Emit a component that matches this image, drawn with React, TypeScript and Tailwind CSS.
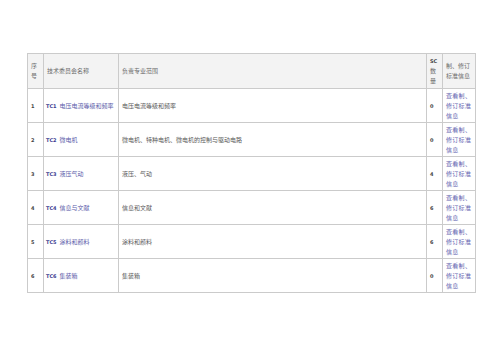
const rows = [
  { no: "1", code: "TC1", name: "电压电流等级和频率", scope: "电压电流等级和频率", sc: "0" },
  { no: "2", code: "TC2", name: "微电机", scope: "微电机、特种电机、微电机的控制与驱动电路", sc: "0" },
  { no: "3", code: "TC3", name: "液压气动", scope: "液压、气动", sc: "4" },
  { no: "4", code: "TC4", name: "信息与文献", scope: "信息和文献", sc: "6" },
  { no: "5", code: "TC5", name: "涂料和颜料", scope: "涂料和颜料", sc: "6" },
  { no: "6", code: "TC6", name: "集装箱", scope: "集装箱", sc: "0" },
];

const cjk = "font-['Noto_Sans_CJK_SC',sans-serif]";
const latin = "font-['DejaVu_Sans','Noto_Sans_CJK_SC',sans-serif]";

export default function App() {
  return (
    <div className="h-[356px] w-[503px] bg-white pl-[27px] pt-[53px]">
      <table className={`w-[448px] table-fixed border-collapse text-[6px] leading-[10px] text-[#5a5a5a] ${cjk}`}>
        <colgroup>
          <col className="w-[16px]" />
          <col className="w-[75px]" />
          <col className="w-[308px]" />
          <col className="w-[16px]" />
          <col className="w-[33px]" />
        </colgroup>
        <thead>
          <tr className="h-[35px] bg-[#f3f3f3] text-[#6a6a6a]">
            <th className="border border-[#cbcbcb] px-[3px] text-left font-normal">序号</th>
            <th className="border border-[#cbcbcb] px-[3px] text-left font-normal">技术委员会名称</th>
            <th className="border border-[#cbcbcb] px-[3px] text-left font-normal">负责专业范围</th>
            <th className="border border-[#cbcbcb] px-[3px] text-left font-normal">
              <span className={`text-[5px] font-semibold text-[#444] ${latin}`}>SC</span>
              <br />数<br />量
            </th>
            <th className="border border-[#cbcbcb] px-[3px] text-left font-normal">制、修订标准信息</th>
          </tr>
        </thead>
        <tbody>
          {rows.map((r) => (
            <tr key={r.no} className="h-[34px]">
              <td className={`border border-[#cbcbcb] px-[3px] text-[5px] font-semibold text-[#444] ${latin}`}>{r.no}</td>
              <td className="border border-[#cbcbcb] px-[2px] whitespace-nowrap text-[#5c5caa]">
                <span className={`mr-[3px] text-[5px] font-semibold text-[#3c3c90] ${latin}`}>{r.code}</span>
                {r.name}
              </td>
              <td className="border border-[#cbcbcb] px-[3px]">{r.scope}</td>
              <td className={`border border-[#cbcbcb] px-[3px] text-[5px] font-semibold text-[#444] ${latin}`}>{r.sc}</td>
              <td className="border border-[#cbcbcb] px-[3px] tracking-[0.3px] text-[#6464b0]">查看制、修订标准信息</td>
            </tr>
          ))}
        </tbody>
      </table>
    </div>
  );
}
